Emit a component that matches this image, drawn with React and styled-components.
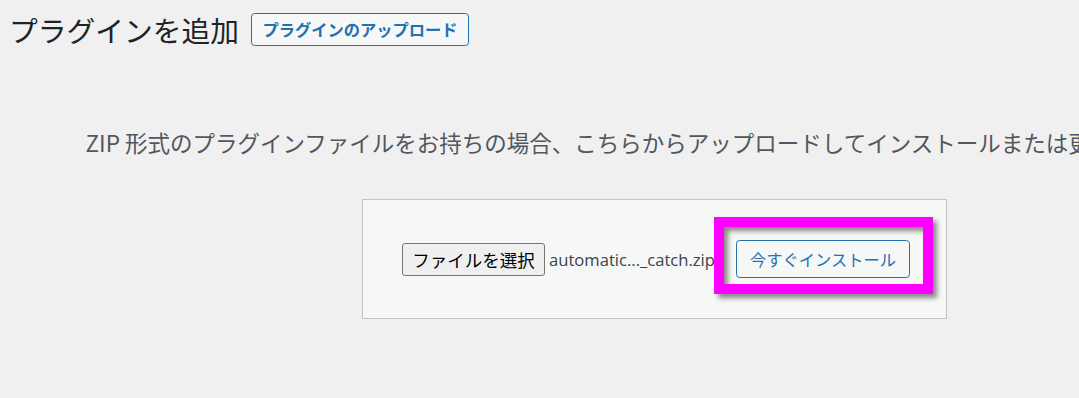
import React from 'react'
import styled, { createGlobalStyle } from 'styled-components'

const GlobalStyle = createGlobalStyle`
  html, body {
    margin: 0;
    padding: 0;
    background: #f0f0f1;
    overflow: hidden;
  }
  body {
    font-family: "Noto Sans CJK JP", "Noto Sans", sans-serif;
    color: #3c434a;
  }
`

const Wrap = styled.div`
  width: 1309px;
  height: 398px;
  box-sizing: border-box;
  padding: 0 0 0 9px;
`

const Header = styled.div`
  display: flex;
  align-items: center;
  gap: 12px;
  padding-top: 13px;
`

const Title = styled.h1`
  margin: 0;
  font-size: 28.75px;
  font-weight: 400;
  line-height: 33px;
  color: #1d2327;
`

const UploadToggle = styled.button`
  box-sizing: border-box;
  height: 33px;
  width: 218px;
  padding: 0 10px;
  border: 1px solid #2271b1;
  border-radius: 3.75px;
  background: #f6f7f7;
  color: #2271b1;
  font-family: "Noto Sans CJK JP", sans-serif;
  font-size: 16.25px;
  font-weight: 700;
  line-height: 1;
  white-space: nowrap;
  cursor: pointer;
`

const UploadArea = styled.div`
  display: flex;
  flex-direction: column;
  align-items: center;
  margin-left: -9px;
`

const Help = styled.p`
  margin: 81px 0 0;
  font-size: 22.5px;
  line-height: 30px;
  color: #50575e;
  white-space: nowrap;
  text-align: center;
`

const UploadForm = styled.form`
  display: inline-flex;
  align-items: center;
  box-sizing: border-box;
  margin-top: 42px;
  padding: 40px 36px 40px 39px;
  background: #f6f7f7;
  border: 1px solid #c3c4c7;
`

const ChooseButton = styled.span`
  box-sizing: border-box;
  display: inline-flex;
  align-items: center;
  justify-content: center;
  width: 143px;
  height: 33px;
  border: 1px solid #767676;
  border-radius: 3px;
  background: #efefef;
  color: #000;
  font-size: 17.5px;
  white-space: nowrap;
`

const FileName = styled.span`
  margin-left: 4px;
  width: 165px;
  font-family: "Open Sans", "Noto Sans", sans-serif;
  font-size: 16.6px;
  color: #3c434a;
  white-space: nowrap;
`

const InstallSlot = styled.div`
  position: relative;
  margin-left: 22px;
`

const InstallButton = styled.button`
  box-sizing: border-box;
  display: block;
  width: 174px;
  height: 38px;
  border: 1px solid #2271b1;
  border-radius: 3.75px;
  background: #f6f7f7;
  color: #2271b1;
  font-family: "Noto Sans CJK JP", sans-serif;
  font-size: 16.25px;
  line-height: 1;
  white-space: nowrap;
  cursor: pointer;
`

const Highlight = styled.div`
  position: absolute;
  left: -22px;
  top: -23px;
  width: 219px;
  height: 77px;
  box-sizing: border-box;
  border: 10px solid #ff00ff;
  box-shadow: 4px 4px 5px rgba(0, 0, 0, 0.45), inset 4px 4px 5px rgba(0, 0, 0, 0.45);
  pointer-events: none;
`

const App = () => {
  return (
    <Wrap>
      <GlobalStyle />
      <Header>
        <Title>プラグインを追加</Title>
        <UploadToggle type="button">プラグインのアップロード</UploadToggle>
      </Header>
      <UploadArea>
        <Help>ZIP 形式のプラグインファイルをお持ちの場合、こちらからアップロードしてインストールまたは更新できます。</Help>
        <UploadForm onSubmit={e => e.preventDefault()}>
          <ChooseButton>ファイルを選択</ChooseButton>
          <FileName>automatic..._catch.zip</FileName>
          <InstallSlot>
            <InstallButton type="submit">今すぐインストール</InstallButton>
            <Highlight />
          </InstallSlot>
        </UploadForm>
      </UploadArea>
    </Wrap>
  )
}

export default App
